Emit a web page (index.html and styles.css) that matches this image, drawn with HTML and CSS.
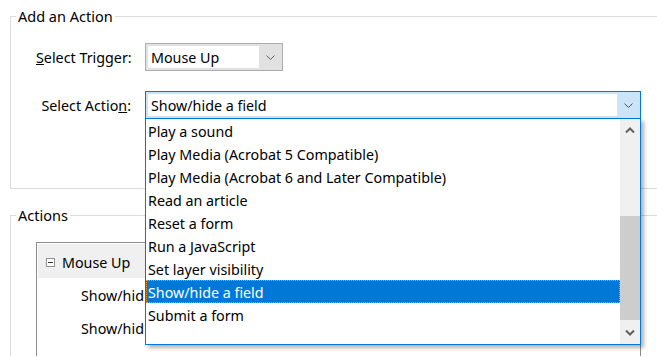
FILE: index.html
```html
<!DOCTYPE html>
<html lang="en">
<head>
  <meta charset="UTF-8" />
  <title>Actions</title>
  <link rel="stylesheet" href="styles.css">
</head>
<body>
  <div class="dialog">
    <fieldset class="group add-group">
      <legend>Add an Action</legend>
      <div class="rows">
        <div class="row">
          <label class="label"><u>S</u>elect Trigger:</label>
          <div class="combo trigger">
            <span class="field">Mouse Up</span>
            <span class="btn">
              <svg width="9" height="5" viewBox="0 0 9 5"><path d="M0.5 0.5 L4.5 4.5 L8.5 0.5" fill="none" stroke="#606060" stroke-width="1"/></svg>
            </span>
          </div>
        </div>
        <div class="row">
          <label class="label">Select Actio<u>n</u>:</label>
          <div class="combo action">
            <span class="field">Show/hide a field</span>
            <span class="btn">
              <svg width="9" height="5" viewBox="0 0 9 5"><path d="M0.5 0.5 L4.5 4.5 L8.5 0.5" fill="none" stroke="#505050" stroke-width="1"/></svg>
            </span>

            <div class="dropdown">
              <ul class="items">
                <li>Play a sound</li>
                <li>Play Media (Acrobat 5 Compatible)</li>
                <li>Play Media (Acrobat 6 and Later Compatible)</li>
                <li>Read an article</li>
                <li>Reset a form</li>
                <li>Run a JavaScript</li>
                <li>Set layer visibility</li>
                <li class="selected">Show/hide a field</li>
                <li>Submit a form</li>
              </ul>
              <div class="scrollbar">
                <div class="arrow">
                  <svg width="10" height="6" viewBox="0 0 10 6"><path d="M1 5.5 L5 1.5 L9 5.5" fill="none" stroke="#606060" stroke-width="2"/></svg>
                </div>
                <div class="track">
                  <div class="thumb"></div>
                </div>
                <div class="arrow">
                  <svg width="10" height="6" viewBox="0 0 10 6"><path d="M1 0.5 L5 4.5 L9 0.5" fill="none" stroke="#606060" stroke-width="2"/></svg>
                </div>
              </div>
            </div>
          </div>
        </div>
      </div>
    </fieldset>

    <fieldset class="group actions-group">
      <legend>Actions</legend>
      <div class="tree">
        <div class="node">
          <span class="toggle"></span>
          <span>Mouse Up</span>
        </div>
        <div class="leaf">Show/hid</div>
        <div class="leaf">Show/hid</div>
      </div>
    </fieldset>
  </div>
</body>
</html>
```

FILE: styles.css
```css
body {
  margin: 0;
  background: #fff;
  color: #000;
  font-family: "Noto Sans", "Open Sans", Arial, sans-serif;
  font-size: 14.3px;
  overflow: hidden;
  width: 657px;
  height: 357px;
}

.dialog {
  padding: 6px 0 0 10px;
}

.group {
  margin: 0;
  border: 1px solid #dcdcdc;
  border-right: none;
  padding: 0;
  min-width: 0;
}

.group legend {
  margin-left: -20px;
  padding: 0 2px;
  line-height: 20px;
  font-size: 14.5px;
}

.add-group {
  padding: 17px 0 69px 25px;
}

.rows {
  display: flex;
  flex-direction: column;
  gap: 20px;
}

.row {
  display: flex;
  align-items: center;
}

.label {
  width: 95px;
  text-align: right;
  margin-right: 14px;
  white-space: nowrap;
}

.combo {
  position: relative;
  display: flex;
  height: 28px;
  box-sizing: border-box;
  padding: 2px 0 2px 2px;
}

.combo .field {
  flex: 1;
  background: #fff;
  line-height: 24px;
  padding-left: 3px;
  white-space: nowrap;
}

.combo .btn {
  width: 23px;
  display: flex;
  align-items: center;
  justify-content: center;
}

.trigger {
  width: 138px;
  border: 1px solid #adadad;
  background: #e1e1e1;
}

.action {
  width: 496px;
  border: 1px solid #0078d7;
  background: #cce4f7;
}

.dropdown {
  position: absolute;
  left: -1px;
  top: 26px;
  width: 496px;
  height: 227px;
  box-sizing: border-box;
  border: 1px solid #0078d7;
  background: #fff;
  display: flex;
  box-shadow: 3px 3px 4px rgba(0, 0, 0, 0.3);
  z-index: 2;
}

.items {
  flex: 1;
  list-style: none;
  margin: 0;
  padding: 0;
}

.items li {
  height: 23px;
  box-sizing: border-box;
  padding: 2px 0 0 2px;
  line-height: 21px;
  white-space: nowrap;
}

.items li.selected {
  background: #0078d7;
  color: #fff;
  outline: 1px dotted #f39a2b;
  outline-offset: -1px;
}

.scrollbar {
  width: 20px;
  background: #f0f0f0;
  display: flex;
  flex-direction: column;
}

.scrollbar .arrow {
  height: 22px;
  display: flex;
  align-items: center;
  justify-content: center;
}

.scrollbar .track {
  flex: 1;
  display: flex;
  flex-direction: column;
  justify-content: flex-end;
  padding-bottom: 2px;
}

.scrollbar .thumb {
  height: 104px;
  background: #cdcdcd;
}

.actions-group {
  margin-top: 16px;
  padding: 17px 0 0 25px;
  border-bottom: none;
}

.tree {
  width: 605px;
  height: 114px;
  border: 1px solid #8c8c8c;
  border-bottom: none;
  padding: 1px;
  box-sizing: border-box;
  overflow: hidden;
}

.node {
  height: 34px;
  background: #f0f0f0;
  display: flex;
  align-items: center;
  padding: 2px 0 0 8px;
  box-sizing: border-box;
  gap: 7px;
}

.toggle {
  width: 9px;
  height: 9px;
  border: 1px solid #919191;
  background: #fff;
  position: relative;
  box-sizing: border-box;
}

.toggle::after {
  content: "";
  position: absolute;
  left: 1px;
  right: 1px;
  top: 3px;
  height: 1px;
  background: #333;
}

.leaf {
  height: 33px;
  line-height: 35px;
  padding-left: 43px;
  white-space: nowrap;
}
```
